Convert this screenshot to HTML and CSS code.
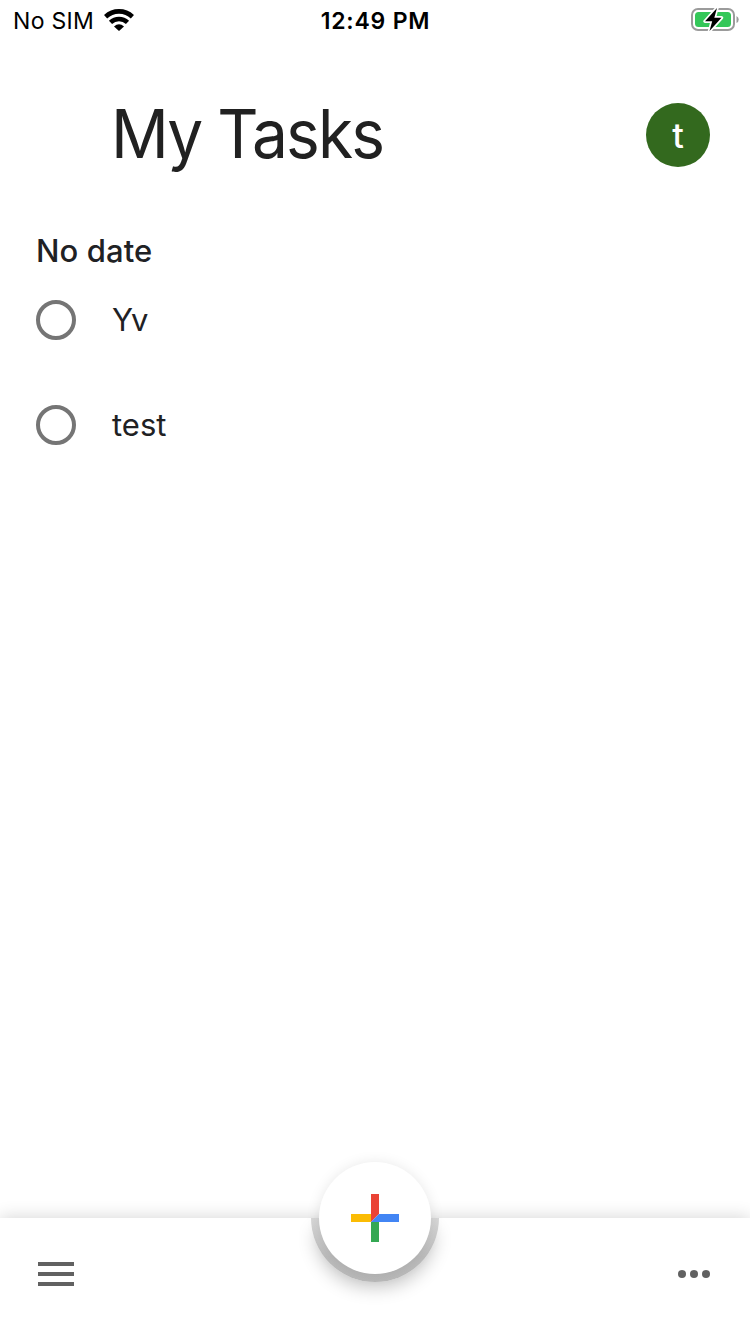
FILE: index.html
```html
<!DOCTYPE html>
<html lang="en">
<head>
<meta charset="utf-8">
<title>My Tasks</title>
<link rel="stylesheet" href="styles.css">
</head>
<body>
<div class="screen">
  <div class="status">
    <div class="carrier"><span class="carrier-name">No SIM</span>
      <svg class="wifi" width="30" height="22" viewBox="0 0 30 22" fill="none" stroke="#000" stroke-width="4.6">
        <path d="M1.6 7.7A19.6 19.6 0 0 1 28.4 7.7"/>
        <path d="M6.5 13.3A12.4 12.4 0 0 1 23.5 13.3"/>
        <path d="M10 17.4Q15 13.2 20 17.4L15 22Z" fill="#000" stroke="none"/>
      </svg>
    </div>
    <div class="clock">12:49 PM</div>
    <svg class="battery" width="50" height="28" viewBox="0 0 50 28">
      <rect x="2" y="5" width="42" height="21" rx="6" fill="#fff" stroke="#9b9b9b" stroke-width="2"/>
      <rect x="5" y="8" width="36" height="15" rx="3.5" fill="#34c759"/>
      <path d="M46.5 12Q48.7 13 48.7 15.5T46.5 19Z" fill="#9b9b9b"/>
      <path d="M27 4L15 17.3H22.2L19.5 27L31.5 13.8H24.3Z" fill="#000" stroke="#fff" stroke-width="3.4" paint-order="stroke" stroke-linejoin="round"/>
    </svg>
  </div>
  <header class="header">
    <h1 class="title">My Tasks</h1>
    <div class="avatar">t</div>
  </header>
  <main class="list">
    <h2 class="group">No date</h2>
    <div class="task"><span class="check"></span><span class="label label-short">Yv</span></div>
    <div class="task"><span class="check"></span><span class="label">test</span></div>
  </main>
  <footer class="bar">
    <svg class="menu" width="36" height="24" viewBox="0 0 36 24" fill="#616161"><path d="M0 0H36V4H0ZM0 10H36V14H0ZM0 20H36V24H0Z"/></svg>
    <svg class="more" width="32" height="8" viewBox="0 0 32 8" fill="#616161"><circle cx="4" cy="4" r="4"/><circle cx="16" cy="4" r="4"/><circle cx="28" cy="4" r="4"/></svg>
    <div class="notch"></div>
    <div class="add">
      <svg width="48" height="48" viewBox="0 0 48 48">
        <path d="M0 20H20V28H0Z" fill="#fbbc04"/>
        <path d="M20 28H28V48H20Z" fill="#34a853"/>
        <path d="M20 0H28V20L20 28Z" fill="#ea4335"/>
        <path d="M28 20H48V28H20Z" fill="#4285f4"/>
      </svg>
    </div>
  </footer>
</div>
</body>
</html>
```
FILE: styles.css
```css
body {
  margin: 0;
  background: #fff;
  color: #202124;
  font-family: Inter, "Liberation Sans", sans-serif;
}
.screen {
  display: flex;
  flex-direction: column;
  width: 750px;
  height: 1334px;
  overflow: hidden;
  background: #fff;
}
.status {
  display: grid;
  grid-template-columns: 1fr auto 1fr;
  align-items: center;
  box-sizing: border-box;
  height: 40px;
  padding: 2px 10px 0 13px;
  color: #000;
  font-size: 23px;
}
.carrier {
  display: flex;
  align-items: center;
  gap: 10px;
}
.carrier-name {
  letter-spacing: 0.3px;
  line-height: 38px;
}
.wifi {
  margin-top: -2px;
}
.clock {
  font-weight: 600;
  letter-spacing: 0.8px;
  margin-left: -2px;
}
.battery {
  justify-self: end;
  margin-top: -6px;
}
.header {
  display: flex;
  align-items: center;
  justify-content: space-between;
  height: 190px;
  padding: 0 40px 0 111px;
}
.title {
  margin: 0 0 2px;
  color: #212121;
  font-size: 67px;
  font-weight: 400;
  letter-spacing: -2px;
  line-height: 80px;
  transform: scaleX(0.955);
  transform-origin: left center;
}
.avatar {
  width: 64px;
  height: 64px;
  border-radius: 50%;
  background: #33691e;
  color: #fff;
  font-size: 34px;
  font-weight: 550;
  line-height: 65px;
  text-align: center;
}
.list {
  flex: 1;
  padding: 0 36px;
}
.group {
  margin: 0;
  height: 70px;
  font-size: 31px;
  font-weight: 550;
  letter-spacing: 0.1px;
  line-height: 42px;
}
.task {
  display: flex;
  align-items: center;
  gap: 36px;
  height: 40px;
  margin-bottom: 65px;
}
.check {
  box-sizing: border-box;
  width: 40px;
  height: 40px;
  border: 4px solid #757575;
  border-radius: 50%;
}
.label {
  font-size: 31px;
  line-height: 40px;
}
.label-short {
  letter-spacing: -2px;
}
.bar {
  position: relative;
  display: flex;
  align-items: center;
  justify-content: space-between;
  box-sizing: border-box;
  height: 116px;
  padding: 0 40px 4px 38px;
  background: #fff;
  box-shadow: 0 -1px 16px rgba(0, 0, 0, 0.16);
}
.notch {
  position: absolute;
  top: 0;
  left: 311px;
  width: 128px;
  height: 64px;
  border-radius: 0 0 64px 64px;
  background: linear-gradient(#d8d8d8, #bcbcbc 60%, #b9b9b9);
  box-shadow: 0 9px 18px -4px rgba(0, 0, 0, 0.23);
}
.add {
  position: absolute;
  top: -56px;
  left: 319px;
  display: flex;
  align-items: center;
  justify-content: center;
  width: 112px;
  height: 112px;
  border-radius: 50%;
  background: #fff;
  box-shadow: 0 1px 14px rgba(0, 0, 0, 0.1);
}
```
